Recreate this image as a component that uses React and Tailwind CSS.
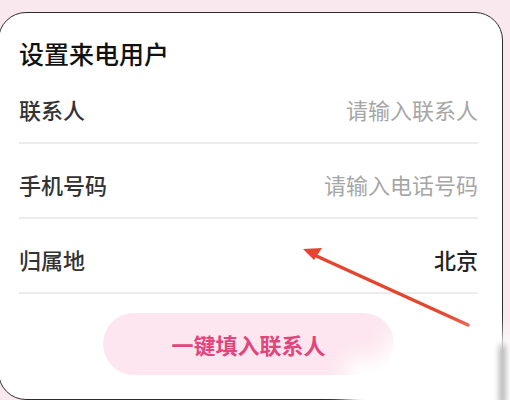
export default function App() {
  const font = { fontFamily: '"Noto Sans CJK SC", "Noto Sans", sans-serif' };
  const rows = [
    { label: "联系人", value: "请输入联系人", ph: true },
    { label: "手机号码", value: "请输入电话号码", ph: true },
    { label: "归属地", value: "北京", ph: false },
  ];
  return (
    <div className="relative w-[510px] h-[400px] overflow-hidden bg-[#f9e8ee]" style={font}>
      <div className="ml-[-2px] mt-[12px] w-[505px] h-[388px] rounded-[28px] border-[1.5px] border-[#2b2b2b] bg-white pl-[20px] pr-[24px] pt-[24px]">
        <div className="h-[32px] flex items-center text-[25px] font-medium text-[#111] leading-none">设置来电用户</div>
        {rows.map((r) => (
          <div key={r.label} className="h-[75px] flex items-center justify-between border-b-2 border-[#ececec] pt-[6px]">
            <span className="text-[22px] text-[#333] font-medium leading-none">{r.label}</span>
            <span className={r.ph ? "text-[22px] text-[#a6a6a6] leading-none" : "text-[22px] text-[#222] font-medium leading-none"}>{r.value}</span>
          </div>
        ))}
        <div className="mt-[19px] mx-auto w-[291px] h-[62px] rounded-full bg-[#fde6ef] flex items-center justify-center">
          <span className="text-[22px] font-bold text-[#e1457c] leading-none">一键填入联系人</span>
        </div>
      </div>
      <svg className="absolute left-0 top-0" width="510" height="400" viewBox="0 0 510 400">
        <line x1="468" y1="325" x2="312" y2="254" stroke="#e5442d" strokeWidth="3.5" strokeLinecap="round" />
        <polygon points="303,249 322,248 314,260" fill="#e5442d" />
      </svg>
      <div className="absolute left-[345px] top-[358px] w-[220px] h-[80px] bg-white blur-[10px]" />
      <div className="absolute left-[385px] top-[335px] w-[140px] h-[60px] bg-white blur-[12px]" />
      <div className="absolute left-[500px] top-[345px] w-[5px] h-[60px] bg-[#9a9a9a] blur-[3px]" />
    </div>
  );
}
